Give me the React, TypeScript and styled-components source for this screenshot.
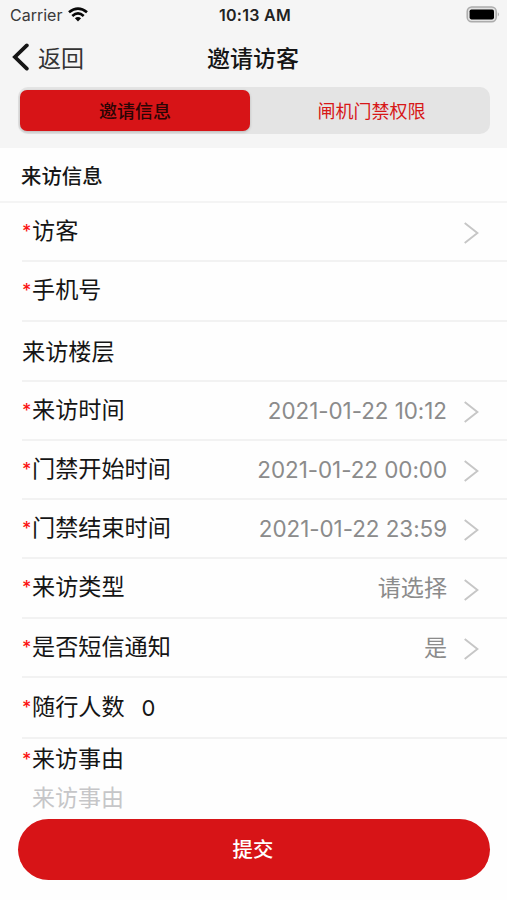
import React from "react";
import styled, { createGlobalStyle } from "styled-components";

const Global = createGlobalStyle`
  * { box-sizing: border-box; }
  body {
    margin: 0;
    background: #fefefe;
    color: #151515;
    font-family: Inter, "Noto Sans CJK SC", sans-serif;
  }
  button, input, textarea { font: inherit; border: 0; padding: 0; margin: 0; background: none; }
`;

const Screen = styled.div`
  width: 507px;
  height: 900px;
  display: flex;
  flex-direction: column;
  overflow: hidden;
`;

const Header = styled.header`
  height: 148px;
  background: #f5f5f5;
  flex: none;
`;

const StatusBar = styled.div`
  height: 30px;
  padding: 0 7px 0 10px;
  display: grid;
  grid-template-columns: 1fr auto 1fr;
  align-items: center;
  line-height: 30px;
`;

const Carrier = styled.span`
  display: flex;
  align-items: center;
  gap: 6px;
  color: #3a3a3a;
  font-size: 16px;

  svg { margin-bottom: 2px; }
`;

const Clock = styled.span`
  font-weight: 600;
  font-size: 16px;
  letter-spacing: 0.3px;
  color: #222;
`;

const BatterySlot = styled.span`
  display: flex;
  justify-content: flex-end;
  padding-bottom: 2px;
`;

const NavBar = styled.nav`
  height: 57px;
  padding: 0 13px 0 12px;
  display: grid;
  grid-template-columns: 1fr auto 1fr;
  align-items: center;
  font-size: 23px;
  line-height: 56px;
`;

const Back = styled.button`
  display: flex;
  align-items: center;
  gap: 8px;
  color: #333;

  svg { margin-bottom: 3px; }
`;

const NavTitle = styled.h1`
  margin: 0;
  font-size: 23px;
  font-weight: 500;
`;

const Segments = styled.div`
  margin: 0 17px 0 18px;
  height: 47px;
  padding: 3px 2px;
  border-radius: 10px;
  background: #e4e4e4;
  display: grid;
  grid-template-columns: 230px 1fr;
`;

const Segment = styled.button<{ $active?: boolean }>`
  border-radius: 7px;
  font-size: 18px;
  line-height: 39px;
  padding-top: 2px;
  padding-left: ${(p) => (p.$active ? 0 : 5)}px;
  font-weight: ${(p) => (p.$active ? 500 : 400)};
  color: ${(p) => (p.$active ? "#2b0505" : "#d71718")};
  background: ${(p) => (p.$active ? "#d71417" : "transparent")};
  box-shadow: ${(p) => (p.$active ? "0 1px 3px rgba(0, 0, 0, 0.2)" : "none")};
`;

const SectionTitle = styled.h2`
  margin: 0;
  height: 55px;
  padding: 2px 0 0 21px;
  border-bottom: 2px solid #f4f4f4;
  font-size: 20.4px;
  line-height: 53px;
  font-weight: 500;
  flex: none;
`;

const Row = styled.div<{ $height: number; $shift?: number }>`
  margin-left: 22px;
  height: ${(p) => p.$height}px;
  padding-right: 28px;
  padding-top: ${(p) => p.$shift ?? 0}px;
  border-bottom: 2px solid #f2f2f2;
  display: flex;
  align-items: center;
  flex: none;
  font-size: 23.15px;
  line-height: 34px;
`;

const Star = styled.span`
  width: 10px;
  flex: none;
  color: #fb1414;
  font-size: 18px;
  font-weight: 500;
`;

const Label = styled.span`
  white-space: nowrap;
  ${Row} > & { margin-bottom: 2px; }
`;

const Count = styled.span`
  margin-left: 17px;
  font-size: 22px;
`;

const Value = styled.span<{ $numeric: boolean }>`
  margin-left: auto;
  margin-right: 17px;
  padding-top: ${(p) => (p.$numeric ? 1 : 0)}px;
  color: #8b8b8b;
  font-size: ${(p) => (p.$numeric ? 22.4 : 23.1)}px;
  letter-spacing: ${(p) => (p.$numeric ? -0.03 : 0)}px;
`;

const ArrowSlot = styled.span`
  display: flex;
  margin-left: auto;
  padding-top: 3px;
  ${Value} + & { margin-left: 0; }
`;

const ReasonField = styled.label`
  display: block;
  margin-left: 22px;
  height: 80px;
  flex: none;
  font-size: 23px;
`;

const ReasonLabel = styled.span`
  display: flex;
  height: 40px;
  line-height: 41px;
`;

const ReasonHint = styled.span`
  display: block;
  padding-left: 10px;
  height: 38px;
  line-height: 38px;
  color: #c6c6c8;
`;

const Submit = styled.button`
  margin: 0 17px 0 18px;
  height: 61px;
  padding-right: 2px;
  border-radius: 31px;
  background: #d71417;
  color: #fff;
  font-size: 20.4px;
  font-weight: 500;
  line-height: 60px;
  flex: none;
`;

const WifiIcon = () => (
  <svg width="20" height="15" viewBox="0 0 20 15" fill="none" stroke="#080808" strokeWidth="2.7">
    <path d="M1 5.3 Q10 -2.2 19 5.3" />
    <path d="M4.3 8.9 Q10 4 15.7 8.9" />
    <path d="M6.9 11.3 Q10 8.9 13.1 11.3 L10 14.4 Z" fill="#080808" stroke="none" />
  </svg>
);

const BatteryIcon = () => (
  <svg width="34" height="17" viewBox="0 0 34 17">
    <rect x="1.2" y="1" width="29" height="14.8" rx="4.5" fill="#e2e2e2" stroke="#acacac" strokeWidth="1.5" />
    <rect x="3.6" y="3.4" width="24.4" height="10" rx="1.8" fill="#000" />
    <path d="M31.8 6.2 Q34 8.4 31.8 10.6 Z" fill="#a9a9a9" />
  </svg>
);

const BackIcon = () => (
  <svg width="18" height="28" viewBox="0 0 18 28" fill="none" stroke="#151515" strokeWidth="3.8" strokeLinecap="round">
    <path d="M14.8 2.4 L2.9 14 L14.8 25.6" strokeLinejoin="miter" />
  </svg>
);

const Arrow = () => (
  <ArrowSlot>
    <svg width="15" height="22" viewBox="0 0 15 22" fill="none" stroke="#c6c6c6" strokeWidth="1.9">
      <path d="M0.7 1 L13.4 11 L0.7 21" />
    </svg>
  </ArrowSlot>
);

type Field = {
  label: string;
  height: number;
  shift?: number;
  required?: boolean;
  value?: string;
  count?: string;
  arrow?: boolean;
};

const fields: Field[] = [
  { label: "访客", height: 59, required: true, arrow: true },
  { label: "手机号", height: 60, required: true },
  { label: "来访楼层", height: 60, shift: 3 },
  { label: "来访时间", height: 59, required: true, value: "2021-01-22 10:12", arrow: true },
  { label: "门禁开始时间", height: 59, required: true, value: "2021-01-22 00:00", arrow: true },
  { label: "门禁结束时间", height: 59, required: true, value: "2021-01-22 23:59", arrow: true },
  { label: "来访类型", height: 60, required: true, value: "请选择", arrow: true },
  { label: "是否短信通知", height: 59, required: true, value: "是", arrow: true },
  { label: "随行人数", height: 61, required: true, count: "0" },
];

export default function App() {
  return (
    <>
      <Global />
      <Screen>
        <Header>
          <StatusBar>
            <Carrier>
              Carrier
              <WifiIcon />
            </Carrier>
            <Clock>10:13 AM</Clock>
            <BatterySlot>
              <BatteryIcon />
            </BatterySlot>
          </StatusBar>
          <NavBar>
            <Back>
              <BackIcon />
              返回
            </Back>
            <NavTitle>邀请访客</NavTitle>
          </NavBar>
          <Segments>
            <Segment $active>邀请信息</Segment>
            <Segment>闸机门禁权限</Segment>
          </Segments>
        </Header>
        <SectionTitle>来访信息</SectionTitle>
        {fields.map((f) => (
          <Row key={f.label} $height={f.height} $shift={f.shift}>
            {f.required && <Star>*</Star>}
            <Label>{f.label}</Label>
            {f.count && <Count>{f.count}</Count>}
            {f.value && <Value $numeric={/^\d/.test(f.value)}>{f.value}</Value>}
            {f.arrow && <Arrow />}
          </Row>
        ))}
        <ReasonField>
          <ReasonLabel>
            <Star>*</Star>
            <Label>来访事由</Label>
          </ReasonLabel>
          <ReasonHint>来访事由</ReasonHint>
        </ReasonField>
        <Submit>提交</Submit>
      </Screen>
    </>
  );
}
